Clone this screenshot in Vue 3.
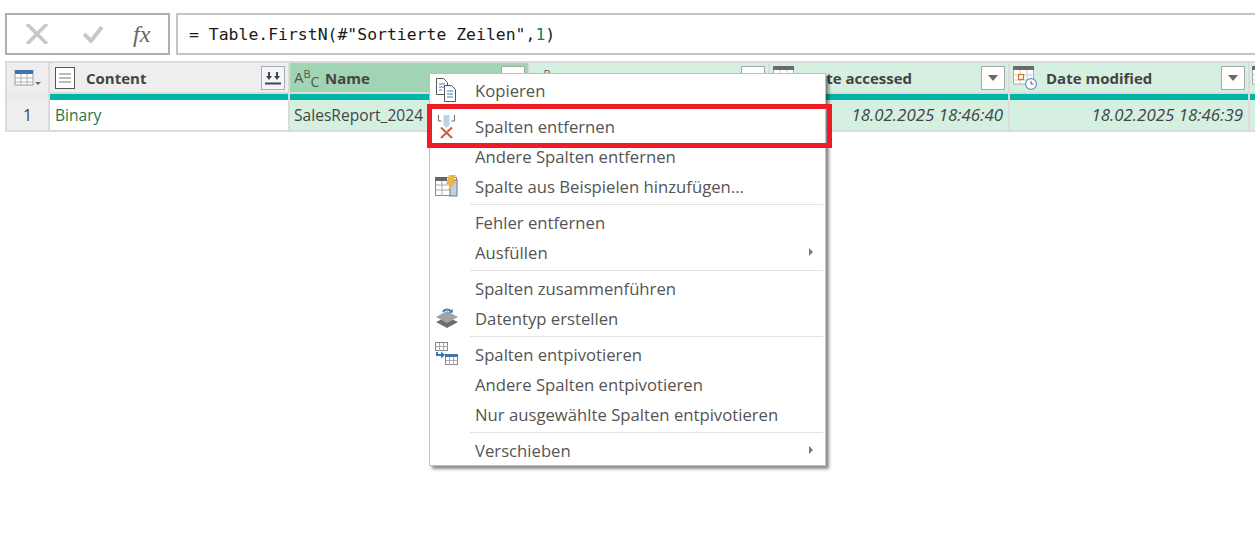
<script setup>
const menu = [
  { label: 'Kopieren', icon: 'copy', gap: true },
  { label: 'Spalten entfernen', icon: 'remove' },
  { label: 'Andere Spalten entfernen' },
  { label: 'Spalte aus Beispielen hinzufügen...', icon: 'flash', sep: true },
  { label: 'Fehler entfernen' },
  { label: 'Ausfüllen', arrow: true, sep: true },
  { label: 'Spalten zusammenführen' },
  { label: 'Datentyp erstellen', icon: 'layers', sep: true },
  { label: 'Spalten entpivotieren', icon: 'unpivot' },
  { label: 'Andere Spalten entpivotieren' },
  { label: 'Nur ausgewählte Spalten entpivotieren', sep: true },
  { label: 'Verschieben', arrow: true },
]
</script>

<template>
  <div class="page">
    <div class="bar">
      <div class="tools">
        <svg class="t-x" width="24" height="20" viewBox="0 0 24 20"><path d="M2 0 L22 20 M22 0 L2 20" stroke="#c8c8c8" stroke-width="3.6" fill="none"/></svg>
        <svg class="t-c" width="22" height="18" viewBox="0 0 22 18"><path d="M2 9 L9 16 L20 2" stroke="#c8c8c8" stroke-width="4" fill="none"/></svg>
        <span class="fx">fx</span>
      </div>
      <div class="formula">= Table.FirstN(#"Sortierte Zeilen",<span class="num">1</span>)</div>
    </div>

    <div class="grid">
      <div class="corner">
        <svg width="27" height="17" viewBox="0 0 27 17">
          <rect x="1" y="0" width="18" height="15" fill="#fff" stroke="#9a9a9a"/>
          <rect x="1" y="0" width="18" height="4" fill="#3f74ad"/>
          <path d="M1 8h18M1 12h18M7 4v11M13 4v11" stroke="#b0b0b0"/>
          <path d="M21 12h6l-3 3z" fill="#666"/>
        </svg>
      </div>
      <div class="head plain">
        <svg width="20" height="22" viewBox="0 0 20 22"><rect x=".5" y=".5" width="19" height="21" fill="#fff" stroke="#555"/><path d="M4 7h12M4 11h12M4 15h12" stroke="#777"/></svg>
        <b class="title">Content</b>
        <span class="btn expand">
          <svg width="16" height="14" viewBox="0 0 16 14"><path d="M4 1v5M12 1v5" stroke="#444" stroke-width="2"/><path d="M1 5h6l-3 4zM9 5h6l-3 4z" fill="#444"/><path d="M0 12.500h16" stroke="#444" stroke-width="2"/></svg>
        </span>
      </div>
      <div class="head selected typed">
        <span class="abc">A<sup>B</sup><sub>C</sub></span>
        <b class="title">Name</b>
        <span class="btn"><i class="caret"></i></span>
      </div>
      <div class="head typed">
        <span class="abc">A<sup>B</sup><sub>C</sub></span>
        <span class="btn"><i class="caret"></i></span>
      </div>
      <div class="head dated">
        <svg class="cal" width="24" height="24" viewBox="0 0 24 24"><use href="#cal"/></svg>
        <b class="title">Date accessed</b>
        <span class="btn"><i class="caret"></i></span>
      </div>
      <div class="head dated">
        <svg class="cal" width="24" height="24" viewBox="0 0 24 24">
          <g id="cal">
            <rect x=".5" y="1" width="20" height="17" fill="#fff" stroke="#aaa"/>
            <rect x="0" y="0" width="21" height="4" fill="#6b6b6b"/>
            <path d="M7 4v14M14 4v14M1 9h20M1 14h20" stroke="#ccc"/>
            <rect x="5.500" y="8.500" width="5" height="5" fill="#fff" stroke="#e0701a" stroke-width="1.2"/>
            <circle cx="18" cy="18" r="5.400" fill="#fff" stroke="#5b8fc7" stroke-width="1.2"/>
            <path d="M18 15v3h2.500" stroke="#555" fill="none"/>
          </g>
        </svg>
        <b class="title">Date modified</b>
        <span class="btn"><i class="caret"></i></span>
      </div>
      <div class="head last">
        <svg class="cal" width="24" height="24" viewBox="0 0 24 24"><use href="#cal"/></svg>
      </div>

      <div class="tcorner"></div>
      <div class="teal"></div><div class="teal"></div><div class="teal"></div>
      <div class="teal"></div><div class="teal"></div><div class="teal"></div>

      <div class="rownum">1</div>
      <div class="cell white green">Binary</div>
      <div class="cell name">SalesReport_2024</div>
      <div class="cell"></div>
      <div class="cell date">18.02.2025 18:46:40</div>
      <div class="cell date">18.02.2025 18:46:39</div>
      <div class="cell"></div>
    </div>

    <div class="menu">
      <template v-for="m in menu" :key="m.label">
        <div class="item" :class="{ spaced: m.gap }">
          <span class="ico">
            <svg v-if="m.icon === 'copy'" width="24" height="24" viewBox="0 0 24 24">
              <path d="M1.500 .5h7l4 4v12h-11z" fill="#fff" stroke="#555"/>
              <path d="M4 6h6M4 9h6M4 12h3" stroke="#3f7fbf"/>
              <path d="M9.500 7.500h7l4 4v12h-11z" fill="#fff" stroke="#555"/>
              <path d="M12 13h6M12 16h6M12 19h6" stroke="#3f7fbf"/>
            </svg>
            <svg v-else-if="m.icon === 'remove'" width="24" height="26" viewBox="0 0 24 26">
              <path d="M3.500 2v6h3M19.500 2v6h-3" stroke="#666" fill="none"/>
              <path d="M8.500 2h6v10l-3 3-3-3z" fill="#b9d3e8"/>
              <path d="M6 14.500 L17 25 M17 14.500 L6 25" stroke="#d8583a" stroke-width="2"/>
            </svg>
            <svg v-else-if="m.icon === 'flash'" width="24" height="22" viewBox="0 0 24 22">
              <rect x=".5" y="2.500" width="21" height="18" fill="#fff" stroke="#888"/>
              <rect x="0" y="2" width="12" height="4" fill="#666"/>
              <rect x="15" y="5" width="7" height="16" fill="#b9d3e8" stroke="#777"/>
              <path d="M1 10h14M1 15h14M7 6v15" stroke="#aaa"/>
              <path d="M14 0h7l-3 6h4l-9 10 2-7h-4z" fill="#f2b441"/>
            </svg>
            <svg v-else-if="m.icon === 'layers'" width="24" height="22" viewBox="0 0 24 22">
              <path d="M1 15 L12 10 L23 15 L12 21z" fill="#6c6c6c"/>
              <path d="M1 10 L12 4 L23 10 L12 16z" fill="#a3a3a3"/>
              <path d="M8 5a4.500 4.500 0 0 1 8 0" stroke="#3f7fbf" stroke-width="2" fill="none"/>
              <path d="M14 6l4-.5-.5-4z" fill="#3f7fbf"/>
            </svg>
            <svg v-else-if="m.icon === 'unpivot'" width="24" height="24" viewBox="0 0 24 24">
              <rect x=".5" y=".5" width="12" height="8" fill="#fff" stroke="#888"/>
              <path d="M1 4.500h12M4.500 1v8M8.500 1v8" stroke="#aaa"/>
              <rect x="10.500" y="12.500" width="12" height="10" fill="#fff" stroke="#888"/>
              <rect x="10" y="12" width="13" height="3" fill="#3f74ad"/>
              <path d="M11 18.500h12M14.500 15v8M18.500 15v8" stroke="#aaa"/>
              <path d="M2 10v3h5" stroke="#2f78c0" stroke-width="2" fill="none"/>
              <path d="M6 9.500l4 3.500-4 3.500z" fill="#2f78c0"/>
            </svg>
          </span>
          <span class="label">{{ m.label }}</span>
          <i v-if="m.arrow" class="arrow"></i>
        </div>
        <div v-if="m.sep" class="sep"></div>
      </template>
      <div class="mark"></div>
    </div>
  </div>
</template>

<style scoped>
.page {
  position: relative;
  width: 1255px;
  height: 533px;
  overflow: hidden;
  background: #fff;
  padding-top: 13px;
  box-sizing: border-box;
  font-family: "Open Sans", "Noto Sans", sans-serif;
  color: #444;
}
.bar {
  display: flex;
  gap: 6px;
  padding-left: 5px;
  height: 42px;
}
.tools {
  width: 165px;
  box-sizing: border-box;
  border: 2px solid #b0b0b0;
  display: flex;
  align-items: center;
  padding-left: 18px;
}
.t-c { margin-left: 33px; }
.fx {
  margin-left: 29px;
  font-family: "Liberation Serif", serif;
  font-style: italic;
  font-size: 24px;
  line-height: 1;
  color: #666;
}
.formula {
  flex: 1;
  box-sizing: border-box;
  border: 2px solid #c4c4c4;
  border-right: 0;
  padding: 1px 0 0 11px;
  font-family: "DejaVu Sans Mono", monospace;
  font-size: 16.45px;
  line-height: 37px;
  color: #1a1a1a;
  white-space: pre;
}
.num { color: #098658; }
.grid {
  margin: 6px 0 0 5px;
  display: grid;
  grid-template-columns: 41px 238px 238px 238px 238px 238px 1fr;
  grid-template-rows: 29px 8px 30px;
  column-gap: 2px;
  background: #dbdbdb;
  padding: 2px 0 2px 2px;
  width: 1250px;
  box-sizing: border-box;
  overflow: hidden;
}
.corner {
  background: #eeeeee;
  padding: 7px 0 0 7px;
}
.head {
  background: #d5f0e1;
  display: flex;
  align-items: center;
  padding: 0 3px 0 5px;
  min-width: 0;
  position: relative;
}
.head.plain { background: #eeeeee; }
.head.selected { background: #a0d4b4; }
.head.typed { padding-left: 4px; }
.head.dated { padding-left: 3px; }
.head.last { overflow: hidden; padding-left: 2px; }
.cal { margin: 0 -2px 0 0; flex: none; }
.title {
  font-size: 15px;
  font-weight: 700;
  color: #444;
  margin-left: 11px;
  white-space: nowrap;
}
.abc {
  font-size: 15px;
  color: #555;
  line-height: 1;
  flex: none;
  width: 20px;
  white-space: nowrap;
}
.abc sup { font-size: 11px; vertical-align: 5px; line-height: 0; }
.abc sub { font-size: 14px; vertical-align: -4px; line-height: 0; }
.btn {
  margin-left: auto;
  width: 24px;
  height: 24px;
  box-sizing: border-box;
  border: 1px solid #a8a8a8;
  background: #fff;
  display: flex;
  align-items: center;
  justify-content: center;
  flex: none;
}
.btn.expand { background: #f2f5fa; border-color: #aab; }
.caret {
  width: 0;
  height: 0;
  border: 5px solid transparent;
  border-top: 6px solid #6a6a6a;
  border-bottom: 0;
}
.tcorner { background: #ececec; }
.teal {
  background: #00b5a5;
  margin-top: 2px;
}
.rownum {
  background: #eeeeee;
  font-size: 16px;
  text-align: center;
  line-height: 30px;
  color: #444;
}
.cell {
  background: #d5f0e1;
  font-size: 15.6px;
  line-height: 30px;
  padding: 0 5px;
  white-space: nowrap;
  overflow: hidden;
  color: #444;
}
.cell.name { padding-left: 4px; }
.white { background: #fff; }
.green { color: #217a4a; }
.date {
  font-size: 16.9px;
  font-style: italic;
  text-align: right;
}
.menu {
  position: absolute;
  left: 429px;
  top: 73px;
  width: 397px;
  height: 393px;
  box-sizing: border-box;
  background: #fff;
  border: 1px solid #c0c0c0;
  box-shadow: 3px 3px 3px rgba(0, 0, 0, 0.45);
}
.item {
  height: 30px;
  display: flex;
  align-items: center;
  position: relative;
}
.item.spaced { margin: 1px 0 6px; }
.ico {
  width: 45px;
  flex: none;
  display: flex;
  justify-content: flex-start;
  padding-left: 5px;
  box-sizing: border-box;
}
.label {
  font-size: 16.7px;
  color: #555;
  white-space: nowrap;
}
.arrow {
  position: absolute;
  right: 12px;
  top: 11px;
  width: 0;
  height: 0;
  border: 4px solid transparent;
  border-left: 4px solid #777;
  border-right: 0;
}
.sep {
  height: 1px;
  margin: 3px 2px 2px 40px;
  background: #e3e3e3;
}
.mark {
  position: absolute;
  left: -3px;
  top: 30px;
  width: 405px;
  height: 44px;
  box-sizing: border-box;
  border: 5px solid #ee1c25;
}
</style>

<style>
html, body { background: #fff; }
</style>
